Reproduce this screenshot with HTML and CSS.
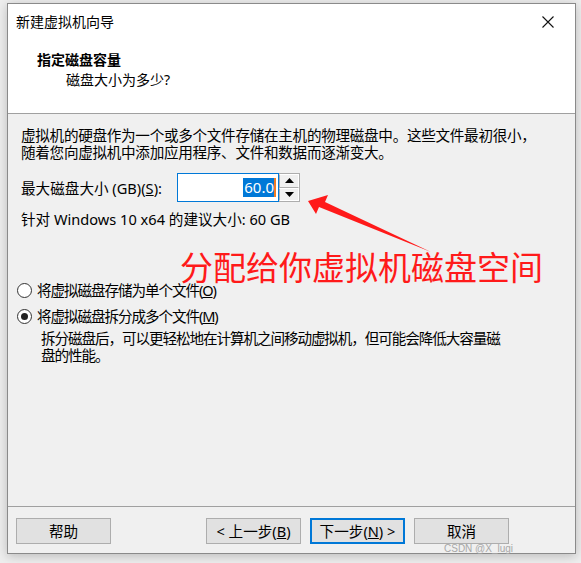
FILE: index.html
```html
<!DOCTYPE html>
<html lang="zh-CN">
<head>
<meta charset="utf-8">
<title>新建虚拟机向导</title>
<link rel="stylesheet" href="styles.css">
</head>
<body>
<div class="window">
  <div class="header">
    <div class="titlebar">
      <span class="title">新建虚拟机向导</span>
      <svg class="close" width="12" height="12" viewBox="0 0 12 12"><path d="M0.5 0.5 L11.5 11.5 M11.5 0.5 L0.5 11.5" stroke="#111" stroke-width="1.1" fill="none"/></svg>
    </div>
    <div class="heading">指定磁盘容量</div>
    <div class="subheading">磁盘大小为多少?</div>
  </div>
  <div class="body">
    <p class="para">虚拟机的硬盘作为一个或多个文件存储在主机的物理磁盘中。这些文件最初很小，<br>随着您向虚拟机中添加应用程序、文件和数据而逐渐变大。</p>
    <div class="sizerow">
      <span class="label">最大磁盘大小 (GB)(<u>S</u>):</span>
      <div class="spinbox">
        <div class="input"><span class="sel">60.0</span><span class="caret"></span></div>
        <div class="spin">
          <div class="spinbtn up"><svg width="9" height="5" viewBox="0 0 9 5"><path d="M4.5 0 L9 5 L0 5 Z" fill="#000"/></svg></div>
          <div class="spinbtn down"><svg width="9" height="5" viewBox="0 0 9 5"><path d="M0 0 L9 0 L4.5 5 Z" fill="#000"/></svg></div>
        </div>
      </div>
    </div>
    <p class="recommend">针对 Windows 10 x64 的建议大小: 60 GB</p>
    <div class="options">
      <div class="radio-row"><span class="radio"></span><span>将虚拟磁盘存储为单个文件(<u>O</u>)</span></div>
      <div class="radio-row"><span class="radio checked"></span><span>将虚拟磁盘拆分成多个文件(<u>M</u>)</span></div>
      <p class="desc">拆分磁盘后，可以更轻松地在计算机之间移动虚拟机，但可能会降低大容量磁<br>盘的性能。</p>
    </div>
  </div>
  <div class="footer">
    <button class="btn">帮助</button>
    <div class="nav">
      <button class="btn">&lt; 上一步(<u>B</u>)</button>
      <button class="btn primary">下一步(<u>N</u>) &gt;</button>
      <button class="btn">取消</button>
    </div>
  </div>
  <div class="note">分配给你虚拟机磁盘空间</div>
  <div class="watermark">CSDN @X_lugi</div>
</div>
<svg class="arrow" width="581" height="563" viewBox="0 0 581 563">
  <polygon points="308,201 328,195 325,202 431,252 319,207 316,214" fill="#ff1a1a"/>
</svg>
</body>
</html>
```
FILE: styles.css
```css
html, body {
  margin: 0;
  padding: 0;
}
body {
  width: 581px;
  height: 563px;
  background: #eeeeee;
  padding: 3px 0 0 7px;
  box-sizing: border-box;
  font-family: "Segoe UI", "Noto Sans", "Noto Sans CJK SC", sans-serif;
  color: #000;
  position: relative;
  overflow: hidden;
}
.window {
  position: relative;
  width: 569px;
  height: 551px;
  box-sizing: border-box;
  border: 1px solid #8a8a8a;
  background: #f0f0f0;
  box-shadow: 0 2px 10px rgba(0,0,0,0.22);
  display: flex;
  flex-direction: column;
}
.header {
  background: #fff;
  height: 109px;
  border-bottom: 1px solid #a0a0a0;
  box-sizing: content-box;
  flex: none;
}
.titlebar {
  height: 36px;
  display: flex;
  align-items: center;
  justify-content: space-between;
  padding: 0 21px 0 8px;
}
.title {
  font-size: 14px;
  line-height: 18px;
}
.close {
  display: block;
}
.heading {
  font-weight: bold;
  font-size: 14px;
  line-height: 18px;
  padding-left: 29px;
  margin-top: 11px;
}
.subheading {
  font-size: 14px;
  line-height: 18px;
  padding-left: 58px;
  margin-top: 2px;
}
.body {
  flex: 1;
  padding: 13px 0 0 13px;
}
.para {
  margin: 0;
  font-size: 14.6px;
  line-height: 17px;
  letter-spacing: -0.3px;
}
.sizerow {
  display: flex;
  align-items: center;
  margin-top: 12px;
  font-size: 14.6px;
  line-height: 17px;
}
.label {
  width: 156px;
  margin-top: 2px;
}
.spinbox {
  display: flex;
}
.input {
  width: 98px;
  height: 27px;
  border: 1px solid #0078d7;
  background: #fff;
  display: flex;
  align-items: center;
  justify-content: flex-end;
  padding-right: 2px;
}
.sel {
  background: #0078d7;
  color: #fff;
  font-size: 15px;
  line-height: 19px;
  padding-left: 1px;
}
.caret {
  width: 2px;
  height: 19px;
  background: #f07b21;
}
.spin {
  width: 21px;
  height: 29px;
  border: 1px solid #adadad;
  border-left: none;
  box-sizing: border-box;
  display: flex;
  flex-direction: column;
  background: #fff;
}
.spinbtn {
  flex: 1;
  display: flex;
  align-items: center;
  justify-content: center;
  background: #f0f0f0;
  border: 1px solid #fff;
  border-left: 1px solid #adadad;
}
.spinbtn.up {
  border-bottom: 1px solid #adadad;
}
.recommend {
  margin: 9px 0 0 0;
  font-size: 14.6px;
  line-height: 17px;
}
.options {
  margin-top: 54px;
  font-size: 14.6px;
  line-height: 17px;
  letter-spacing: -1.1px;
}
.radio-row {
  display: flex;
  align-items: center;
  height: 17px;
  margin-bottom: 9px;
  margin-left: -4px;
}
.radio {
  width: 15px;
  height: 15px;
  border: 1px solid #333;
  border-radius: 50%;
  background: #fff;
  box-sizing: border-box;
  margin-right: 5px;
  position: relative;
  flex: none;
}
.radio.checked::after {
  content: "";
  position: absolute;
  left: 3px;
  top: 3px;
  width: 7px;
  height: 7px;
  border-radius: 50%;
  background: #222;
}
.desc {
  margin: -4px 0 0 20px;
  line-height: 17px;
}
.footer {
  flex: none;
  height: 47px;
  border-top: 1px solid #a0a0a0;
  display: flex;
  align-items: flex-start;
  padding: 11px 66px 0 8px;
  box-sizing: border-box;
}
.nav {
  margin-left: auto;
  display: flex;
  gap: 9px;
}
.btn {
  width: 95px;
  height: 26px;
  border: 1px solid #adadad;
  background: #e1e1e1;
  font-family: "Segoe UI", "Noto Sans", "Noto Sans CJK SC", sans-serif;
  font-size: 14.6px;
  line-height: 17px;
  color: #000;
  padding: 0;
  margin: 0;
}
.btn.primary {
  border: 2px solid #0078d7;
}
.note {
  position: absolute;
  left: 172px;
  top: 246px;
  font-family: "Noto Sans CJK SC", sans-serif;
  font-size: 33px;
  line-height: 32px;
  color: #ff1a1a;
  white-space: nowrap;
}
.watermark {
  position: absolute;
  left: 436px;
  top: 538px;
  font-family: "Liberation Sans", sans-serif;
  font-size: 10px;
  line-height: 13px;
  color: #a8a8a8;
  white-space: nowrap;
}
.arrow {
  position: absolute;
  left: 0;
  top: 0;
  pointer-events: none;
}
```
